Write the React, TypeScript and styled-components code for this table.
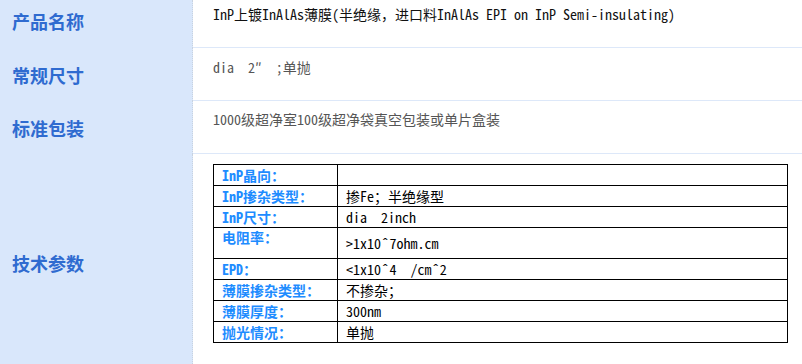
import styled, { createGlobalStyle } from 'styled-components';

const GlobalStyle = createGlobalStyle`
  html, body {
    margin: 0;
    padding: 0;
    background: #fff;
    overflow: hidden;
  }
`;

const mono = `"Noto Sans Mono CJK SC", "Noto Sans CJK SC", "Liberation Mono", monospace`;

const specs = [
  { label: 'InP晶向：', value: '' },
  { label: 'InP掺杂类型：', value: '掺Fe；半绝缘型' },
  { label: 'InP尺寸：', value: 'dia  2inch' },
  { label: '电阻率：', value: '>1x10ˆ7ohm.cm', tall: true },
  { label: 'EPD：', value: '<1x10ˆ4  /cmˆ2' },
  { label: '薄膜掺杂类型：', value: '不掺杂；' },
  { label: '薄膜厚度：', value: '300nm' },
  { label: '抛光情况：', value: '单抛' },
];

const App = () => {
  return (
    <>
      <GlobalStyle />
      <Page>
        <Row $h={48}>
          <Label $pt={9}>产品名称</Label>
          <Content $pt={4} $tone="#111">
            InP上镀InAlAs薄膜(半绝缘，进口料InAlAs EPI on InP Semi-insulating)
          </Content>
        </Row>
        <Row $h={53}>
          <Label $pt={15}>常规尺寸</Label>
          <Content $pt={9} $tone="#555">dia  2″  ;单抛</Content>
        </Row>
        <Row $h={53}>
          <Label $pt={15}>标准包装</Label>
          <Content $pt={8} $tone="#555">1000级超净室100级超净袋真空包装或单片盒装</Content>
        </Row>
        <Row $h={210} $last>
          <Label $pt={97}>技术参数</Label>
          <Content $pt={10} $tone="#000" $last>
            <SpecTable>
              <tbody>
                {specs.map((s) => (
                  <SpecRow key={s.label} $tall={s.tall}>
                    <SpecName $top={s.tall}>{s.label}</SpecName>
                    <SpecValue>{s.value}</SpecValue>
                  </SpecRow>
                ))}
              </tbody>
            </SpecTable>
          </Content>
        </Row>
      </Page>
    </>
  );
};

export default App;

const Page = styled.div`
  width: 802px;
  height: 364px;
  display: flex;
  flex-direction: column;
  background: #fff;
`;

const Row = styled.div<{ $h: number; $last?: boolean }>`
  display: grid;
  grid-template-columns: 193px 1fr;
  height: ${({ $h }) => $h}px;
  flex: ${({ $last }) => ($last ? '1 0 auto' : '0 0 auto')};
`;

const Label = styled.div<{ $pt: number }>`
  background: #d9e7fb;
  border-right: 1px dotted #c9d3e0;
  padding: ${({ $pt }) => $pt}px 0 0 12px;
  font-family: "Noto Sans CJK SC", sans-serif;
  font-weight: bold;
  font-size: 18px;
  line-height: 24px;
  color: #2f6bd0;
`;

const Content = styled.div<{ $pt: number; $tone: string; $last?: boolean }>`
  padding: ${({ $pt }) => $pt}px 0 0 20px;
  border-bottom: ${({ $last }) => ($last ? 'none' : '1px solid #dde8f9')};
  font-family: ${mono};
  font-size: 14px;
  line-height: 20px;
  color: ${({ $tone }) => $tone};
  white-space: pre;
`;

const SpecTable = styled.table`
  border-collapse: collapse;
  width: 575px;
  table-layout: fixed;
  font-family: ${mono};
  font-size: 14px;
`;

const SpecRow = styled.tr<{ $tall?: boolean }>`
  height: ${({ $tall }) => ($tall ? 31 : 21)}px;
`;

const SpecName = styled.td<{ $top?: boolean }>`
  width: 115px;
  border: 1px solid #000;
  padding: 0 0 0 8px;
  vertical-align: ${({ $top }) => ($top ? 'top' : 'middle')};
  color: #1e8cff;
  font-weight: bold;
  line-height: 19px;
`;

const SpecValue = styled.td`
  border: 1px solid #000;
  padding: 0 0 0 8px;
  color: #000;
  line-height: 19px;
`;
